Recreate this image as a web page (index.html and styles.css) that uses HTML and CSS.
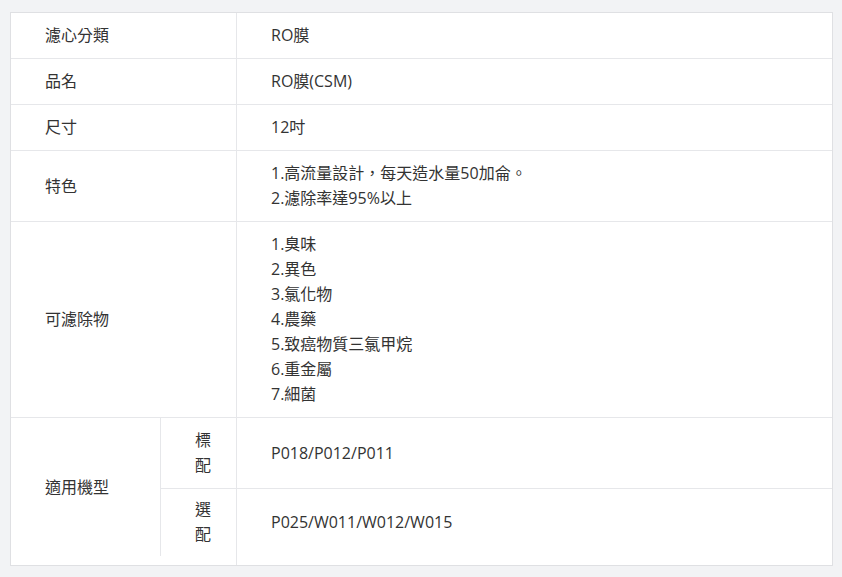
FILE: index.html
```html
<!DOCTYPE html>
<html lang="zh-Hant">
<head>
<meta charset="utf-8">
<title>RO膜</title>
<link rel="stylesheet" href="styles.css">
</head>
<body>
<div class="spec">
  <div class="cell label wide">濾心分類</div>
  <div class="cell value">RO膜</div>

  <div class="cell label wide">品名</div>
  <div class="cell value">RO膜(CSM)</div>

  <div class="cell label wide">尺寸</div>
  <div class="cell value">12吋</div>

  <div class="cell label wide middle">特色</div>
  <div class="cell value">1.高流量設計，每天造水量50加侖。<br>2.濾除率達95%以上</div>

  <div class="cell label wide middle">可濾除物</div>
  <div class="cell value">1.臭味<br>2.異色<br>3.氯化物<br>4.農藥<br>5.致癌物質三氯甲烷<br>6.重金屬<br>7.細菌</div>

  <div class="cell label models middle">適用機型</div>
  <div class="cell sub">標配</div>
  <div class="cell value middle">P018/P012/P011</div>
  <div class="cell sub last">選配</div>
  <div class="cell value middle last">P025/W011/W012/W015</div>
  <div class="spacer"></div>
</div>
</body>
</html>
```
FILE: styles.css
```css
html, body {
  margin: 0;
  padding: 0;
  background: #f2f3f5;
}
body {
  padding: 12px 9px 12px 10px;
  font-family: "Open Sans", "Noto Sans CJK TC", sans-serif;
  font-size: 16px;
  color: #333333;
}
.spec {
  display: grid;
  grid-template-columns: 149px 76px 1fr;
  background: #ffffff;
  border: 1px solid #dfe0e3;
}
.cell {
  padding: 10px 34px;
  line-height: 25px;
  border-bottom: 1px solid #e6e7ea;
  box-sizing: border-box;
}
.label.wide {
  grid-column: 1 / 3;
}
.middle {
  display: flex;
  flex-direction: column;
  justify-content: center;
}
.value {
  grid-column: 3;
  border-left: 1px solid #e6e7ea;
}
.label.models {
  grid-column: 1;
  grid-row: span 2;
  border-bottom: none;
}
.sub {
  grid-column: 2;
  border-left: 1px solid #e6e7ea;
}
.last {
  border-bottom: none;
  padding-top: 8px;
  padding-bottom: 9px;
}
.spacer {
  grid-column: 3;
  height: 9px;
  border-left: 1px solid #e6e7ea;
}
```
